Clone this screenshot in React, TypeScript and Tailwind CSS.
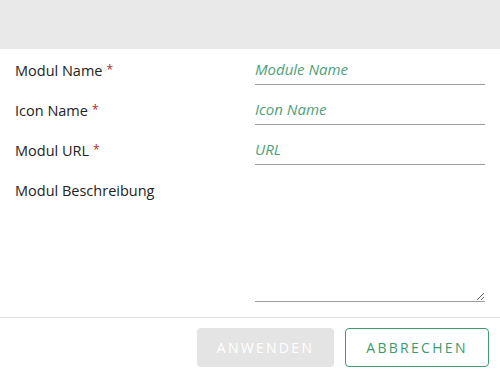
import React from "react";

const Row = ({ label, placeholder }: { label: string; placeholder: string }) => (
  <div className="flex items-start h-[40px] shrink-0">
    <div className="w-[255px] pl-[15px] pt-[12px] text-[14.5px] leading-[20px] text-[#222]">
      {label}
      <span className="text-[#b3261e] ml-[4px] text-[12px] align-top relative top-[-1px]">*</span>
    </div>
    <div className="flex-1 pr-[15px] pt-[11px]">
      <input
        placeholder={placeholder}
        className="block box-border w-full h-[25px] border-b border-[#9e9e9e] outline-none italic text-[15px] leading-[18px] placeholder:text-[#4e9f7a] bg-transparent pt-0 pb-[6px]"
      />
    </div>
  </div>
);

export default function App() {
  return (
    <div className="w-[500px] h-[378px] bg-white flex flex-col overflow-hidden" style={{ fontFamily: '"Open Sans", sans-serif' }}>
      <div className="h-[49px] shrink-0 bg-[#e9e9e9]" />
      <Row label="Modul Name" placeholder="Module Name" />
      <Row label="Icon Name" placeholder="Icon Name" />
      <Row label="Modul URL" placeholder="URL" />
      <div className="flex items-start h-[133px] shrink-0">
        <div className="w-[255px] pl-[15px] pt-[12px] text-[14.5px] leading-[20px] text-[#222]">Modul Beschreibung</div>
        <div className="flex-1 pr-[15px] pt-[11px]">
          <textarea className="w-full h-[122px] border-b border-[#9e9e9e] outline-none block bg-transparent" />
        </div>
      </div>
      <div className="h-[15px] shrink-0" />
      <div className="border-t border-[#e0e0e0] shrink-0 flex justify-end gap-[11px] pt-[10px] pr-[11px]">
        <button className="w-[137px] h-[39px] rounded-[4px] bg-[#e4e4e4] text-white text-[14px] tracking-[2.3px]">ANWENDEN</button>
        <button className="w-[144px] h-[39px] rounded-[4px] border border-[#3d9b6e] text-[#3d9b6e] text-[14px] tracking-[2.3px] bg-white">ABBRECHEN</button>
      </div>
    </div>
  );
}
